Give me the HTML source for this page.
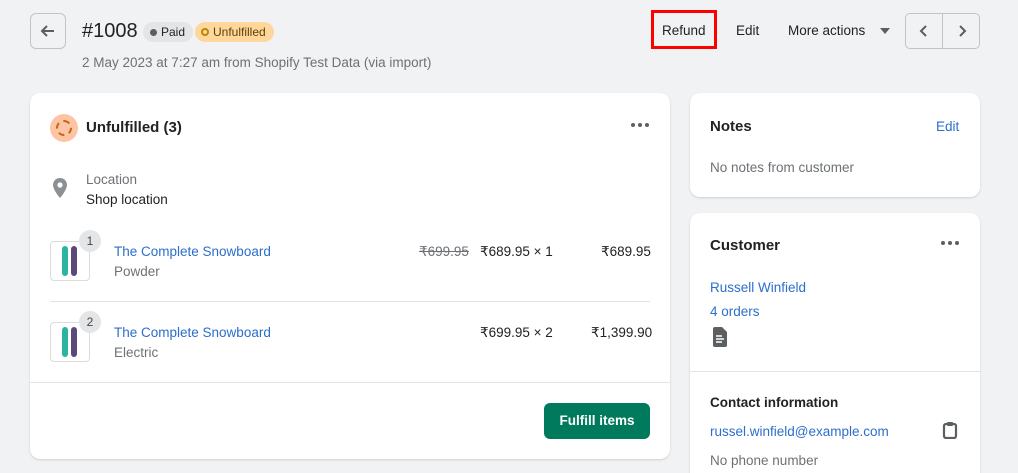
<!DOCTYPE html>
<html><head><style>
*{margin:0;padding:0;box-sizing:border-box}
html,body{width:1018px;height:473px;overflow:hidden}
body{background:#f1f2f4;font-family:"Liberation Sans",sans-serif;font-size:13.5px;color:#202223;position:relative}
.a{position:absolute;white-space:nowrap}
.card{position:absolute;background:#fff;border-radius:10px;box-shadow:0 1px 2px rgba(0,0,0,.15)}
.link{color:#2c6ecb}
.sub{color:#6d7175}
.b{font-weight:bold}
.thumb{position:absolute;width:40px;height:40px;border:1px solid #dcdcdc;border-radius:4px;background:#fff}
.badge{position:absolute;width:22px;height:22px;border-radius:50%;background:#e4e5e7;font-size:12px;text-align:center;line-height:22px;color:#44474a}
</style></head><body>
<div class="a" style="left:30px;top:13px;width:36px;height:36px;border:1px solid #c0c4c8;border-radius:6px"></div>
<svg class="a" style="left:38px;top:21px" width="20" height="20"><path d="M16 10H4M9 5L4 10L9 15" stroke="#5c5f62" stroke-width="2" fill="none"/></svg>
<div class="a" style="left:82px;top:20px;font-size:20px">#1008</div>
<div class="a" style="left:143px;top:22px;height:20px;padding:0 8px 0 18px;background:#e4e5e7;border-radius:10px;font-size:12px;line-height:20px">Paid</div>
<div class="a" style="left:150px;top:29px;width:7px;height:7px;border-radius:50%;background:#5c5f62"></div>
<div class="a" style="left:195px;top:22px;height:20px;padding:0 8px 0 18px;background:#ffd79d;border-radius:10px;font-size:12px;line-height:20px;color:#5e4200">Unfulfilled</div>
<div class="a" style="left:201px;top:28px;width:8px;height:8px;border-radius:50%;border:2px solid #b98900"></div>
<div class="a sub" style="left:82px;top:55px">2 May 2023 at 7:27 am from Shopify Test Data (via import)</div>
<div class="a" style="left:651px;top:10px;width:66px;height:39px;border:3px solid #f00"></div>
<div class="a" style="left:662px;top:23px">Refund</div>
<div class="a" style="left:736px;top:23px">Edit</div>
<div class="a" style="left:788px;top:23px">More actions</div>
<div class="a" style="left:880px;top:28px;border-left:5px solid transparent;border-right:5px solid transparent;border-top:6px solid #5c5f62"></div>
<div class="a" style="left:905px;top:13px;width:75px;height:36px;border:1px solid #c0c4c8;border-radius:5px"></div>
<div class="a" style="left:942px;top:13px;width:1px;height:36px;background:#c0c4c8"></div>
<svg class="a" style="left:915px;top:22px" width="56" height="18"><path d="M11 4L6 9L11 14M45 4L50 9L45 14" stroke="#5c5f62" stroke-width="2" fill="none"/></svg>

<div class="card" style="left:30px;top:93px;width:640px;height:366px">
 <div class="a" style="left:20px;top:21px;width:28px;height:28px;border-radius:50%;background:#ffc4a3"></div>
 <div class="a" style="left:26px;top:27px;width:16px;height:16px;border-radius:50%;border:2px dashed #b86b1f"></div>
 <div class="a b" style="left:56px;top:26px;font-size:15px">Unfulfilled (3)</div>
 <svg class="a" style="left:600px;top:29px" width="20" height="6"><circle cx="3" cy="3" r="2" fill="#5c5f62"/><circle cx="10" cy="3" r="2" fill="#5c5f62"/><circle cx="17" cy="3" r="2" fill="#5c5f62"/></svg>
 <svg class="a" style="left:22px;top:84px" width="16" height="22"><path d="M8 1C4 1 1 4 1 8c0 5 7 13 7 13s7-8 7-13c0-4-3-7-7-7z" fill="#8c9196"/><circle cx="8" cy="8" r="2.6" fill="#fff"/></svg>
 <div class="a sub" style="left:56px;top:79px">Location</div>
 <div class="a" style="left:56px;top:99px">Shop location</div>

 <div class="thumb" style="left:20px;top:148px"></div>
 <svg class="a" style="left:30px;top:151px" width="20" height="35"><rect x="2" y="2" width="6" height="30" rx="3" fill="#2bb5a0"/><rect x="11" y="2" width="6" height="30" rx="3" fill="#5a4a7a"/></svg>
 <div class="badge" style="left:49px;top:137px">1</div>
 <div class="a link" style="left:84px;top:151px">The Complete Snowboard</div>
 <div class="a sub" style="left:84px;top:171px">Powder</div>
 <div class="a sub" style="left:389px;top:151px;text-decoration:line-through">₹699.95</div>
 <div class="a" style="left:450px;top:151px">₹689.95 × 1</div>
 <div class="a" style="left:571px;top:151px">₹689.95</div>
 <div class="a" style="left:20px;top:208px;width:600px;height:1px;background:#e1e3e5"></div>

 <div class="thumb" style="left:20px;top:229px"></div>
 <svg class="a" style="left:30px;top:232px" width="20" height="35"><rect x="2" y="2" width="6" height="30" rx="3" fill="#2bb5a0"/><rect x="11" y="2" width="6" height="30" rx="3" fill="#5a4a7a"/></svg>
 <div class="badge" style="left:49px;top:218px">2</div>
 <div class="a link" style="left:84px;top:232px">The Complete Snowboard</div>
 <div class="a sub" style="left:84px;top:252px">Electric</div>
 <div class="a" style="left:450px;top:232px">₹699.95 × 2</div>
 <div class="a" style="left:561px;top:232px">₹1,399.90</div>
 <div class="a" style="left:0;top:289px;width:640px;height:1px;background:#e1e3e5"></div>
 <div class="a b" style="left:514px;top:310px;width:106px;height:36px;background:#007a5c;border-radius:6px;color:#fff;text-align:center;line-height:36px">Fulfill items</div>
</div>

<div class="card" style="left:690px;top:93px;width:290px;height:104px">
 <div class="a b" style="left:20px;top:25px;font-size:15px">Notes</div>
 <div class="a link" style="left:246px;top:26px">Edit</div>
 <div class="a sub" style="left:20px;top:67px">No notes from customer</div>
</div>
<div class="card" style="left:690px;top:213px;width:290px;height:280px">
 <div class="a b" style="left:20px;top:24px;font-size:15px">Customer</div>
 <svg class="a" style="left:250px;top:27px" width="20" height="6"><circle cx="3" cy="3" r="2" fill="#5c5f62"/><circle cx="10" cy="3" r="2" fill="#5c5f62"/><circle cx="17" cy="3" r="2" fill="#5c5f62"/></svg>
 <div class="a link" style="left:20px;top:67px">Russell Winfield</div>
 <div class="a link" style="left:20px;top:91px">4 orders</div>
 <svg class="a" style="left:22px;top:114px" width="16" height="20"><path d="M1 2a2 2 0 012-2h7l5 5v13a2 2 0 01-2 2H3a2 2 0 01-2-2z" fill="#5c5f62"/><path d="M4 9h6M4 12h8M4 15h6" stroke="#fff" stroke-width="1.6"/></svg>
 <div class="a" style="left:0;top:158px;width:290px;height:1px;background:#e1e3e5"></div>
 <div class="a b" style="left:20px;top:182px">Contact information</div>
 <div class="a link" style="left:20px;top:211px">russel.winfield@example.com</div>
 <svg class="a" style="left:252px;top:208px" width="16" height="18"><rect x="2" y="3" width="12" height="14" rx="2" fill="none" stroke="#5c5f62" stroke-width="2.2"/><rect x="5" y="1" width="6" height="4" rx="1" fill="#5c5f62"/></svg>
 <div class="a sub" style="left:20px;top:240px">No phone number</div>
</div>
</body></html>
